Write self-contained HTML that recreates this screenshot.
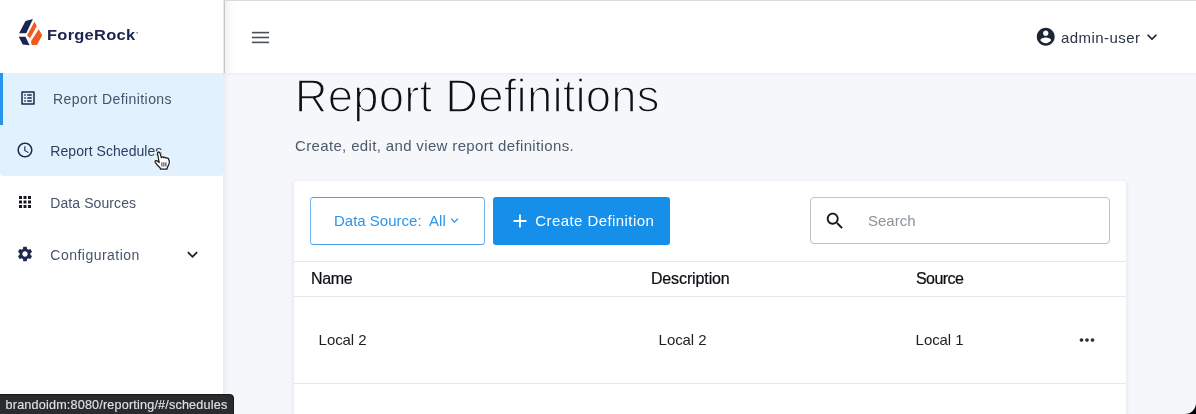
<!DOCTYPE html>
<html lang="en">
<head>
<meta charset="utf-8">
<title>Report Definitions</title>
<style>
*{box-sizing:border-box;margin:0;padding:0}
html,body{width:1196px;height:414px;overflow:hidden;background:#000}
body{font-family:"Liberation Sans","DejaVu Sans",sans-serif;color:#324054;position:relative}
svg{position:absolute;display:block;overflow:visible}
#app{will-change:transform;position:absolute;left:0;top:0;width:1196px;height:414px;background:#f5f7fb;overflow:hidden;border-bottom-right-radius:11px}
#side{position:absolute;left:0;top:0;width:223px;height:414px;background:#fff;box-shadow:1px 0 7px rgba(60,70,90,.11);z-index:3}
#brand{position:absolute;left:47px;top:23.3px;font-size:15.3px;line-height:24px;font-weight:700;color:#1c2450;white-space:nowrap;letter-spacing:.25px;transform:scaleX(1.075);transform-origin:0 50%}
.nav{position:absolute;left:0;width:223px;height:52px;font-size:14px;color:#455469;white-space:nowrap}
.nav .tx{position:absolute;left:50.3px;top:0;line-height:52px}
.nav svg{left:16.3px;top:16.8px;width:18px;height:18px;fill:#1d2a4d}
#n1{top:72.6px;background:#e1f1fd}
#n1:before{content:"";position:absolute;left:0;top:0;width:3px;height:52px;background:#2793ee}
#n1 svg{left:19.3px}
#n1 .tx{left:53px;letter-spacing:.43px}
#n2{top:124.6px;height:51.2px;background:#e1f1fd;border-radius:0 0 3px 4px}
#n2 .tx{letter-spacing:.05px;color:#2e3d5f}
#n3{top:176.6px}
#n3 svg{fill:#15181f}
#n3 .tx{letter-spacing:.08px}
#n4{top:228.6px}
#n4 .tx{letter-spacing:.48px}
#head{position:absolute;left:224px;top:0;width:972px;height:73px;background:linear-gradient(90deg,#f1f1f2 0,#fbfbfb 5px,#fff 11px);border-top:1px solid #dadada;border-left:1px solid #c6c6c7;box-shadow:0 1px 2px rgba(60,70,90,.06);z-index:4}
#user{position:absolute;left:835.9px;top:0;height:73px;line-height:74px;font-size:15px;color:#2a3444;white-space:nowrap;letter-spacing:.46px}
h1{position:absolute;left:294.8px;top:67.1px;font-size:45.5px;font-weight:400;color:#0d1015;line-height:60px;white-space:nowrap;letter-spacing:.18px;-webkit-text-stroke:1.5px #f5f7fb}
#sub{position:absolute;left:295px;top:136px;font-size:15px;line-height:20px;color:#4c5a6b;white-space:nowrap;letter-spacing:.35px}
#card{position:absolute;left:294px;top:181px;width:832px;height:260px;background:#fff;border-radius:4px;box-shadow:0 1px 4px rgba(60,70,90,.14)}
#b1{position:absolute;left:16px;top:16px;width:175px;height:48px;border:1px solid;border-color:#7f92b0 #77b2f3 #4c9fee #77b2f3;border-radius:3.5px;color:#2b95ec;font-size:15px;line-height:46px;white-space:nowrap}
#b1 span{position:absolute;left:23px;top:0}
#b2{position:absolute;left:199px;top:16px;width:177px;height:48px;background:#158fea;border-radius:3px;color:#fff;font-size:15px;line-height:48px;white-space:nowrap}
#b2 span{position:absolute;left:42.3px;top:0;letter-spacing:.42px}
#search{position:absolute;left:516px;top:16px;width:300px;height:47px;border:1px solid #bfc2c7;border-radius:4px;background:#fff}
#search span{position:absolute;left:57px;top:0;line-height:45px;font-size:15px;color:#8a929c}
.hr{position:absolute;left:0;width:832px;height:1px;background:#e4e6ea}
.th{position:absolute;top:87.9px;font-size:16px;line-height:20px;color:#0c0f14;white-space:nowrap;-webkit-text-stroke:.22px #0c0f14;margin-left:-.1px;letter-spacing:-.28px}
.td{position:absolute;margin-left:-.4px;top:149px;font-size:15px;line-height:20px;color:#1c1f24;white-space:nowrap;letter-spacing:-.07px}
#status{position:absolute;left:-1px;top:393.5px;width:234.5px;height:22px;background:#2a2b2e;border:1px solid #17181a;border-top-right-radius:4px;color:#dfe0e3;font-size:12.6px;line-height:21.5px;padding-left:5.6px;z-index:6;white-space:nowrap;letter-spacing:.19px;-webkit-text-stroke:.15px #dfe0e3}
#cursor{left:140px;top:138px;width:40px;height:40px;z-index:7}
</style>
</head>
<body>
<div id="app">
  <div id="side">
    <svg id="logo" style="left:0;top:0" width="150" height="60" viewBox="0 0 150 60">
      <polygon points="25.5,21.1 32.9,19.1 26.3,33.2 19.1,33.2" fill="#1c2450"/>
      <polygon points="18.7,36.8 25.5,36.8 29.6,45.3 22.7,44.4" fill="#1c2450"/>
      <circle cx="137.100" cy="32.800" r=".75" fill="#1c2450" opacity=".75"/>
      <polygon points="34.4,21.8 36.8,25.900 30.100,38.300 27,35.400" fill="#f25a1d"/>
      <polygon points="38.7,29.2 42.2,35.2 37,45 31.7,45 31,41.2" fill="#f25a1d"/>
    </svg>
    <div id="brand">ForgeRock</div>
    <div class="nav" id="n1"><svg viewBox="0 0 24 24"><path d="M11 7h6v2h-6zm0 4h6v2h-6zm0 4h6v2h-6zM7 7h2v2H7zm0 4h2v2H7zm0 4h2v2H7zM20.1 3H3.9c-.5 0-.9.4-.9.9v16.2c0 .4.4.9.9.9h16.2c.4 0 .9-.5.9-.9V3.9c0-.5-.5-.9-.9-.9zM19 19H5V5h14v14z"/></svg><span class="tx">Report Definitions</span></div>
    <div class="nav" id="n2"><svg viewBox="0 0 24 24"><path d="M11.99 2C6.47 2 2 6.48 2 12s4.47 10 9.99 10C17.52 22 22 17.52 22 12S17.52 2 11.99 2zM12 20c-4.42 0-8-3.58-8-8s3.58-8 8-8 8 3.58 8 8-3.58 8-8 8zm.5-13H11v6l5.25 3.15.75-1.23-4.5-2.67z"/></svg><span class="tx">Report Schedules</span></div>
    <div class="nav" id="n3"><svg viewBox="0 0 24 24"><path d="M4 8h4V4H4v4zm6 12h4v-4h-4v4zm-6 0h4v-4H4v4zm0-6h4v-4H4v4zm6 0h4v-4h-4v4zm6-10v4h4V4h-4zm-6 4h4V4h-4v4zm6 6h4v-4h-4v4zm0 6h4v-4h-4v4z"/></svg><span class="tx">Data Sources</span></div>
    <div class="nav" id="n4"><svg viewBox="0 0 24 24"><path d="M19.14 12.94c.04-.3.06-.61.06-.94 0-.32-.02-.64-.07-.94l2.03-1.58c.18-.14.23-.41.12-.61l-1.92-3.32c-.12-.22-.37-.29-.59-.22l-2.39.96c-.5-.38-1.03-.7-1.62-.94l-.36-2.54c-.04-.24-.24-.41-.48-.41h-3.84c-.24 0-.43.17-.47.41l-.36 2.54c-.59.24-1.13.57-1.62.94l-2.39-.96c-.22-.08-.47 0-.59.22L2.74 8.870c-.12.21-.08.47.12.61l2.030 1.580c-.05.3-.09.63-.09.94s.02.64.07.94l-2.030 1.580c-.18.14-.23.41-.12.61l1.920 3.320c.12.22.37.29.59.22l2.390-.96c.5.38 1.030.7 1.620.94l.36 2.540c.05.24.24.41.48.41h3.840c.24 0 .44-.17.47-.41l.36-2.540c.59-.24 1.130-.56 1.620-.94l2.390.96c.22.08.47 0 .59-.22l1.920-3.320c.12-.22.07-.47-.12-.61l-2.010-1.580zM12 15.600c-1.980 0-3.600-1.620-3.600-3.600s1.620-3.600 3.600-3.600 3.600 1.620 3.600 3.600-1.620 3.600-3.600 3.600z"/></svg><span class="tx">Configuration</span>
      <svg viewBox="0 0 24 24" style="left:181.5px;top:15.5px;width:21px;height:21px;fill:#1a1f2b"><path d="M16.59 8.59L12 13.17 7.41 8.590 6 10l6 6 6-6z"/></svg></div>
    <svg id="cursor" viewBox="0 0 40 40"><path d="M17.500 15.500c-.4-1.500 1.900-2.100 2.400-.6l1.500 4.700c.5-1.100 2.000-1.000 2.400.1.600-.8 2.100-.5 2.400.5.800-.6 2.200-.1 2.400.9.700 1.200 1.100 2.600.6 4.300l-1.900 4.300-.3 1.500h-6.500l-.5-1.500c-1.500-1.300-3.400-3.300-4.800-5.300-.8-1.200.6-2.400 1.700-1.600l2.300 1.700z" fill="#fff" stroke="#fff" stroke-width="3" stroke-linejoin="round" opacity=".8"/><path d="M17.500 15.500c-.4-1.500 1.900-2.100 2.400-.6l1.500 4.700c.5-1.100 2.000-1.000 2.400.1.600-.8 2.100-.5 2.400.5.800-.6 2.200-.1 2.400.9.700 1.200 1.100 2.600.6 4.300l-1.900 4.300-.3 1.500h-6.500l-.5-1.500c-1.500-1.300-3.400-3.300-4.800-5.300-.8-1.200.6-2.400 1.700-1.600l2.300 1.700z" fill="#fff" stroke="#16181c" stroke-width="1.250" stroke-linejoin="round"/><path d="M21.900 24.300v4.200M23.900 24.300v4.200M25.900 24.300v4.200" stroke="#16181c" stroke-width=".9" fill="none"/></svg>
  </div>
  <div id="head">
    <svg viewBox="0 0 20 14" style="left:26.000px;top:29.100px;width:20px;height:14px;fill:#4b4f56"><rect x=".9" y="1.800" width="17.200" height="1.600"/><rect x=".9" y="6.700" width="17.200" height="1.600"/><rect x=".9" y="11.600" width="17.200" height="1.600"/></svg>
    <svg viewBox="0 0 24 24" style="left:809.800px;top:25.100px;width:21.500px;height:21.500px;fill:#1d2533"><path d="M12 2C6.480 2 2 6.480 2 12s4.480 10 10 10 10-4.480 10-10S17.520 2 12 2zm0 3c1.660 0 3 1.340 3 3s-1.340 3-3 3-3-1.340-3-3 1.340-3 3-3zm0 14.200c-2.500 0-4.710-1.280-6-3.220.03-1.990 4-3.080 6-3.080 1.990 0 5.970 1.090 6 3.080-1.290 1.940-3.500 3.220-6 3.220z"/></svg>
    <div id="user">admin-user</div>
    <svg viewBox="0 0 24 24" style="left:917px;top:26.400px;width:20px;height:20px;fill:#1a1f2b"><path d="M16.590 8.590L12 13.170 7.410 8.590 6 10l6 6 6-6z"/></svg>
  </div>
  <h1>Report Definitions</h1>
  <div id="sub">Create, edit, and view report definitions.</div>
  <div id="card">
    <div id="b1"><span>Data Source:&nbsp; All</span><svg viewBox="0 0 24 24" style="left:135.700px;top:15.200px;width:15px;height:15px;fill:#2b95ec"><path d="M16.590 8.590L12 13.170 7.410 8.590 6 10l6 6 6-6z"/></svg></div>
    <div id="b2"><svg viewBox="0 0 24 24" style="left:15.500px;top:12.700px;width:22px;height:22px;fill:#fff"><path d="M19 13h-6v6h-2v-6H5v-2h6V5h2v6h6v2z"/></svg><span>Create Definition</span></div>
    <div id="search"><svg viewBox="0 0 24 24" style="left:13px;top:11.500px;width:22px;height:22px;fill:#14171c"><path d="M15.500 14h-.79l-.28-.27C15.410 12.590 16 11.110 16 9.500 16 5.910 13.090 3 9.500 3S3 5.910 3 9.500 5.910 16 9.500 16c1.610 0 3.090-.59 4.230-1.570l.27.28v.79l5 4.990L20.490 19l-4.990-5zm-6 0C7.010 14 5 11.990 5 9.500S7.010 5 9.500 5 14 7.010 14 9.500 11.990 14 9.500 14z"/></svg><span>Search</span></div>
    <div class="hr" style="top:80px"></div>
    <div class="th" style="left:17px">Name</div>
    <div class="th" style="left:357px;letter-spacing:-.12px">Description</div>
    <div class="th" style="left:622px;letter-spacing:-.52px">Source</div>
    <div class="hr" style="top:115px"></div>
    <div class="td" style="left:25px">Local 2</div>
    <div class="td" style="left:365px">Local 2</div>
    <div class="td" style="left:622px">Local 1</div>
    <svg viewBox="0 0 24 24" style="left:782px;top:148px;width:22px;height:22px;fill:#2a2f38"><path d="M6 10c-1.100 0-2 .9-2 2s.9 2 2 2 2-.9 2-2-.9-2-2-2zm12 0c-1.100 0-2 .9-2 2s.9 2 2 2 2-.9 2-2-.9-2-2-2zm-6 0c-1.100 0-2 .9-2 2s.9 2 2 2 2-.9 2-2-.9-2-2-2z"/></svg>
    <div class="hr" style="top:202px"></div>
  </div>
  <div id="status">brandoidm:8080/reporting/#/schedules</div>
</div>
</body>
</html>
